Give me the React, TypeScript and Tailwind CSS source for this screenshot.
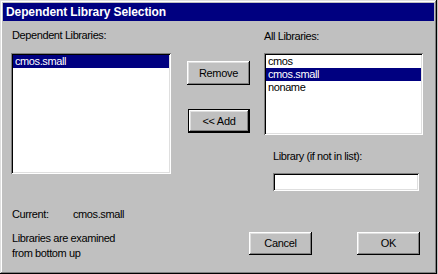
const raised =
  'shadow-[inset_-1px_-1px_#000,inset_1px_1px_#fff,inset_-2px_-2px_#808080,inset_2px_2px_#dfdfdf]';
const sunken =
  'shadow-[inset_1px_1px_#808080,inset_-1px_-1px_#fff,inset_2px_2px_#000,inset_-2px_-2px_#dfdfdf]';
const defaultBtn =
  'shadow-[inset_0_0_0_1px_#000,inset_-2px_-2px_#000,inset_2px_2px_#fff,inset_-3px_-3px_#808080,inset_3px_3px_#dfdfdf]';

function Button({ label, className, isDefault }: { label: string; className: string; isDefault?: boolean }) {
  return (
    <button
      type="button"
      className={`flex items-center justify-center bg-[#c0c0c0] text-[11px] leading-[13px] tracking-[-0.3px] text-black ${
        isDefault ? defaultBtn : raised
      } ${className}`}
    >
      {label}
    </button>
  );
}

function ListBox({ items, selected, className }: { items: string[]; selected: string; className: string }) {
  return (
    <div className={`bg-white p-[2px] ${sunken} ${className}`}>
      {items.map((it) => (
        <div
          key={it}
          className={`h-[13px] pl-[2px] text-[11px] leading-[13px] ${
            it === selected ? 'bg-[#000080] text-white' : 'text-black'
          }`}
        >
          {it}
        </div>
      ))}
    </div>
  );
}

export default function App() {
  return (
    <div className="w-[438px] h-[274px] bg-[#c0c0c0] font-['Liberation_Sans',Arial,sans-serif]">
      <div className="w-[437px] h-[274px] p-[3px] flex flex-col shadow-[inset_-1px_-1px_#000,inset_1px_1px_#dfdfdf,inset_-2px_-2px_#808080,inset_2px_2px_#fff]">
        <div className="h-[18px] shrink-0 bg-[#000080] pl-[3px] text-[12px] leading-[18px] font-bold tracking-[-0.1px] text-white">
          Dependent Library Selection
        </div>

        <div className="pl-[8px] pt-[8px] text-[11px] leading-[13px] tracking-[-0.4px] text-black">
          <div className="flex">
            <div className="w-[160px] flex flex-col">
              <div className="ml-[1px] h-[13px]">Dependent Libraries:</div>
              <ListBox items={['cmos.small']} selected="cmos.small" className="mt-[11px] h-[121px]" />
            </div>

            <div className="ml-[16px] w-[63px] flex flex-col">
              <Button label="Remove" className="mt-[32px] h-[24px] w-[63px]" />
              <Button label="<< Add" isDefault className="mt-[24px] h-[24px] w-[62px] ml-[1px]" />
            </div>

            <div className="ml-[14px] w-[159px] flex flex-col">
              <div className="mt-[1px] h-[13px]">All Libraries:</div>
              <ListBox
                items={['cmos', 'cmos.small', 'noname']}
                selected="cmos.small"
                className="mt-[10px] h-[82px]"
              />
              <div className="ml-[9px] mt-[15px] h-[13px]">Library (if not in list):</div>
              <div className={`ml-[9px] mt-[10px] h-[18px] w-[146px] bg-white ${sunken}`} />
            </div>
          </div>

          <div className="mt-[17px] flex">
            <div className="w-[160px]">
              <div className="ml-[1px] flex h-[13px]">
                <span className="w-[61px]">Current:</span>
                <span>cmos.small</span>
              </div>
              <div className="ml-[1px] mt-[10px] leading-[15px]">
                <div>Libraries are examined</div>
                <div>from bottom up</div>
              </div>
            </div>
            <Button label="Cancel" className="ml-[78px] mt-[24px] h-[23px] w-[63px]" />
            <Button label="OK" className="ml-[45px] mt-[24px] h-[23px] w-[63px]" />
          </div>
        </div>
      </div>
    </div>
  );
}
